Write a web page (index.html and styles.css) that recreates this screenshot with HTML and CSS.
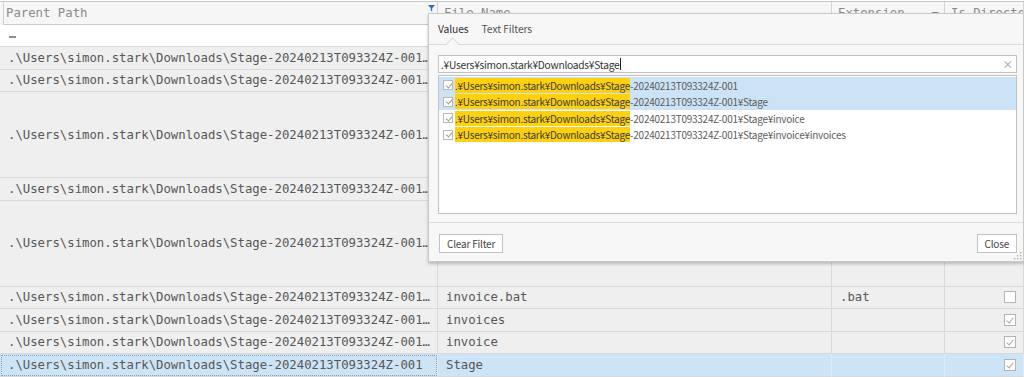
FILE: index.html
```html
<!DOCTYPE html>
<html>
<head>
<meta charset="utf-8">
<title>Grid with filter popup</title>
<link rel="stylesheet" href="styles.css">
</head>
<body>
<div class="grid">
  <div class="row head">
    <div class="cell c1"><span class="t">Parent Path</span>
      <svg class="funnel" width="7" height="7" viewBox="0 0 7 7"><path d="M0 0H7L4.2 3.2V6.5L2.8 5.6V3.2Z" fill="#2a6fc0"/></svg>
    </div>
    <div class="cell c2"><span class="t">File Name</span></div>
    <div class="cell c3"><span class="t">Extension</span><span class="hmark">=</span></div>
    <div class="cell c4"><span class="t">Is Directory</span></div>
  </div>
  <div class="row frow">
    <div class="cell c1"><span class="eq"></span></div>
    <div class="cell c2"></div>
    <div class="cell c3"></div>
    <div class="cell c4"></div>
  </div>
  <div class="row data">
    <div class="cell c1"><span class="t">.\Users\simon.stark\Downloads\Stage-20240213T093324Z-001\Stage\invoice\invoices</span></div>
    <div class="cell c2"><span class="t">invoice-2024-01.pdf</span></div>
    <div class="cell c3"><span class="t">.pdf</span></div>
    <div class="cell c4"><span class="cb"></span></div>
  </div>
  <div class="row data">
    <div class="cell c1"><span class="t">.\Users\simon.stark\Downloads\Stage-20240213T093324Z-001\Stage\invoice\invoices</span></div>
    <div class="cell c2"><span class="t">invoice-2024-02.pdf</span></div>
    <div class="cell c3"><span class="t">.pdf</span></div>
    <div class="cell c4"><span class="cb"></span></div>
  </div>
  <div class="row data tall">
    <div class="cell c1"><span class="t">.\Users\simon.stark\Downloads\Stage-20240213T093324Z-001\Stage\invoice\invoices</span></div>
    <div class="cell c2"><span class="t">summary.txt</span></div>
    <div class="cell c3"><span class="t">.txt</span></div>
    <div class="cell c4"><span class="cb"></span></div>
  </div>
  <div class="row data">
    <div class="cell c1"><span class="t">.\Users\simon.stark\Downloads\Stage-20240213T093324Z-001\Stage\invoice</span></div>
    <div class="cell c2"><span class="t">readme.md</span></div>
    <div class="cell c3"><span class="t">.md</span></div>
    <div class="cell c4"><span class="cb"></span></div>
  </div>
  <div class="row data tall">
    <div class="cell c1"><span class="t">.\Users\simon.stark\Downloads\Stage-20240213T093324Z-001\Stage\invoice</span></div>
    <div class="cell c2"><span class="t">notes.txt</span></div>
    <div class="cell c3"><span class="t">.txt</span></div>
    <div class="cell c4"><span class="cb"></span></div>
  </div>
  <div class="row data">
    <div class="cell c1"><span class="t">.\Users\simon.stark\Downloads\Stage-20240213T093324Z-001\Stage\invoice</span></div>
    <div class="cell c2"><span class="t">invoice.bat</span></div>
    <div class="cell c3"><span class="t">.bat</span></div>
    <div class="cell c4"><span class="cb"></span></div>
  </div>
  <div class="row data">
    <div class="cell c1"><span class="t">.\Users\simon.stark\Downloads\Stage-20240213T093324Z-001\Stage\invoice</span></div>
    <div class="cell c2"><span class="t">invoices</span></div>
    <div class="cell c3"></div>
    <div class="cell c4"><span class="cb on"></span></div>
  </div>
  <div class="row data">
    <div class="cell c1"><span class="t">.\Users\simon.stark\Downloads\Stage-20240213T093324Z-001\Stage</span></div>
    <div class="cell c2"><span class="t">invoice</span></div>
    <div class="cell c3"></div>
    <div class="cell c4"><span class="cb on"></span></div>
  </div>
  <div class="row data selected">
    <div class="cell c1 focus"><span class="t">.\Users\simon.stark\Downloads\Stage-20240213T093324Z-001</span></div>
    <div class="cell c2"><span class="t">Stage</span></div>
    <div class="cell c3"></div>
    <div class="cell c4"><span class="cb on"></span></div>
  </div>
</div>

<div class="popup">
  <div class="tabs">
    <span class="tab active">Values</span>
    <span class="tab">Text Filters</span>
  </div>
  <div class="pbody">
    <div class="search">
      <span class="stext">.¥Users¥simon.stark¥Downloads¥Stage</span><span class="caret"></span>
      <span class="clear">×</span>
    </div>
    <div class="list">
      <div class="item sel"><span class="pcb"></span><span class="itext"><mark>.¥Users¥simon.stark¥Downloads¥Stage</mark>-20240213T093324Z-001</span></div>
      <div class="item sel"><span class="pcb"></span><span class="itext"><mark>.¥Users¥simon.stark¥Downloads¥Stage</mark>-20240213T093324Z-001¥Stage</span></div>
      <div class="item"><span class="pcb"></span><span class="itext"><mark>.¥Users¥simon.stark¥Downloads¥Stage</mark>-20240213T093324Z-001¥Stage¥invoice</span></div>
      <div class="item"><span class="pcb"></span><span class="itext"><mark>.¥Users¥simon.stark¥Downloads¥Stage</mark>-20240213T093324Z-001¥Stage¥invoice¥invoices</span></div>
    </div>
  </div>
  <div class="pfoot">
    <button class="btn">Clear Filter</button>
    <button class="btn">Close</button>
  </div>
  <svg class="grip" width="9" height="9" viewBox="0 0 9 9">
    <rect x="7" y="1" width="1.4" height="1.4" fill="#b0b0b0"/>
    <rect x="4" y="4" width="1.4" height="1.4" fill="#b0b0b0"/>
    <rect x="7" y="4" width="1.4" height="1.4" fill="#b0b0b0"/>
    <rect x="1" y="7" width="1.4" height="1.4" fill="#b0b0b0"/>
    <rect x="4" y="7" width="1.4" height="1.4" fill="#b0b0b0"/>
    <rect x="7" y="7" width="1.4" height="1.4" fill="#b0b0b0"/>
  </svg>
</div>
</body>
</html>
```

FILE: styles.css
```css
* { box-sizing: border-box; }
html, body { margin: 0; padding: 0; background: #fff; }
body {
  width: 1024px;
  height: 377px;
  overflow: hidden;
  position: relative;
  font-family: "DejaVu Sans Mono", "Liberation Mono", monospace;
  font-size: 12.3px;
  color: #575757;
}

.grid { padding-top: 1px; width: 1024px; overflow: hidden; }

.row {
  display: grid;
  grid-template-columns: 438px 394px 113px 79px;
}

.cell {
  display: flex;
  align-items: center;
  min-width: 0;
  overflow: hidden;
  white-space: nowrap;
  padding: 0 3px 0 8px;
  border-right: 1px solid #d9d9d9;
  border-bottom: 1px solid #d9d9d9;
}
.cell .t {
  display: block;
  min-width: 0;
  overflow: hidden;
  text-overflow: ellipsis;
  white-space: nowrap;
}

/* header */
.head {
  height: 24px;
  border-top: 1px solid #c8c8c8;
  background: #f6f6f6;
}
.head .cell {
  border-bottom: 1px solid #cacaca;
  border-right: 1px solid #d2d2d2;
  color: #8a8a8a;
  padding-left: 6px;
}
.head .c1 {
  position: relative;
  margin-left: 3px;
  border-left: 1px solid #cfcfcf;
  padding-left: 2px;
}
.head .c4 .t { overflow: visible; text-overflow: clip; }
.funnel { position: absolute; right: 2px; top: 3px; }
.hmark { margin-left: auto; padding-right: 2px; color: #8a8a8a; }

/* filter row */
.frow { height: 22px; background: #fff; }
.frow .cell { border-bottom: 1px solid #d9d9d9; border-right-color: #e6e6e6; }
.eq { display: block; width: 7px; height: 2px; background: #8c8c8c; margin: 2px 0 0 1px; }

/* data rows */
.data { height: 22.5px; background: #efefef; }
.data.tall { height: 86px; }
.data .c4 { justify-content: flex-end; padding-right: 7px; }

.selected { background: #cde4f7; }
.selected .cell { border-right-color: #e2ebf3; }
.selected .focus { outline: 1px dotted #8e9aa6; outline-offset: -2px; }

.cb {
  width: 12px;
  height: 12px;
  border: 1px solid #b3b3b3;
  background: #fff;
  position: relative;
}
.cb.on::after {
  content: "";
  position: absolute;
  left: 3px;
  top: 1px;
  width: 3px;
  height: 6px;
  border-right: 1px solid #a8a8a8;
  border-bottom: 1px solid #a8a8a8;
  transform: rotate(40deg);
}

/* popup */
.popup {
  position: absolute;
  left: 428px;
  top: 13px;
  width: 596px;
  height: 249px;
  background: #f7f7f7;
  border: 1px solid #c9c9c9;
  box-shadow: 0 2px 3px rgba(0, 0, 0, 0.22);
  display: flex;
  flex-direction: column;
  font-family: "Noto Sans CJK JP", "Noto Sans", sans-serif;
  font-size: 10px;
  letter-spacing: -0.25px;
  color: #555;
}

.tabs {
  height: 31px;
  display: flex;
  align-items: center;
  gap: 13px;
  padding: 0 0 1px 9px;
  border-bottom: 1px solid #dadada;
  position: relative;
  font-size: 10.3px;
  letter-spacing: -0.1px;
}
.tab { color: #555; }
.tab.active { color: #333; position: relative; }
.tab.active::after {
  content: "";
  position: absolute;
  left: 10px;
  bottom: -12px;
  width: 8px;
  height: 8px;
  background: #f7f7f7;
  border-left: 1px solid #dadada;
  border-top: 1px solid #dadada;
  transform: rotate(45deg);
}

.pbody {
  padding: 10px 6px 0 9px;
  display: flex;
  flex-direction: column;
  gap: 2px;
}

.search {
  height: 18px;
  background: #fff;
  border: 1px solid #c2c2c2;
  display: flex;
  align-items: center;
  padding: 0 3px 0 2px;
  color: #333;
  font-size: 10.2px;
}
.caret { width: 1px; height: 12px; background: #222; margin-left: 1px; }
.clear { margin-left: auto; color: #999; font-size: 11px; }

.list {
  height: 139px;
  background: #fff;
  border: 1px solid #c2c2c2;
  padding: 1px 0;
}
.item {
  height: 16.5px;
  display: flex;
  align-items: center;
  padding-left: 4px;
  gap: 2px;
  color: #5c5c5c;
  white-space: nowrap;
}
.item.sel { background: #cce3f6; }
.pcb {
  width: 10px;
  height: 10px;
  border: 1px solid #b8b8b8;
  background: #fff;
  position: relative;
  flex: none;
}
.pcb::after {
  content: "";
  position: absolute;
  left: 2.5px;
  top: 0.5px;
  width: 3px;
  height: 5px;
  border-right: 1px solid #9a9a9a;
  border-bottom: 1px solid #9a9a9a;
  transform: rotate(40deg);
}
mark {
  background: #fdd10f;
  color: #3a3a3a;
}

.pfoot {
  margin-top: 8px;
  border-top: 1px solid #dcdcdc;
  padding: 11px 6px 0 10px;
  display: flex;
  justify-content: space-between;
  align-items: flex-start;
}
.btn {
  height: 19px;
  padding: 0 7px;
  background: #fff;
  border: 1px solid #c3c3c3;
  font-family: "Noto Sans CJK JP", "Noto Sans", sans-serif;
  font-size: 10px;
  letter-spacing: -0.2px;
  color: #444;
  border-radius: 0;
}
.grip { position: absolute; right: 1px; bottom: 1px; }
```
